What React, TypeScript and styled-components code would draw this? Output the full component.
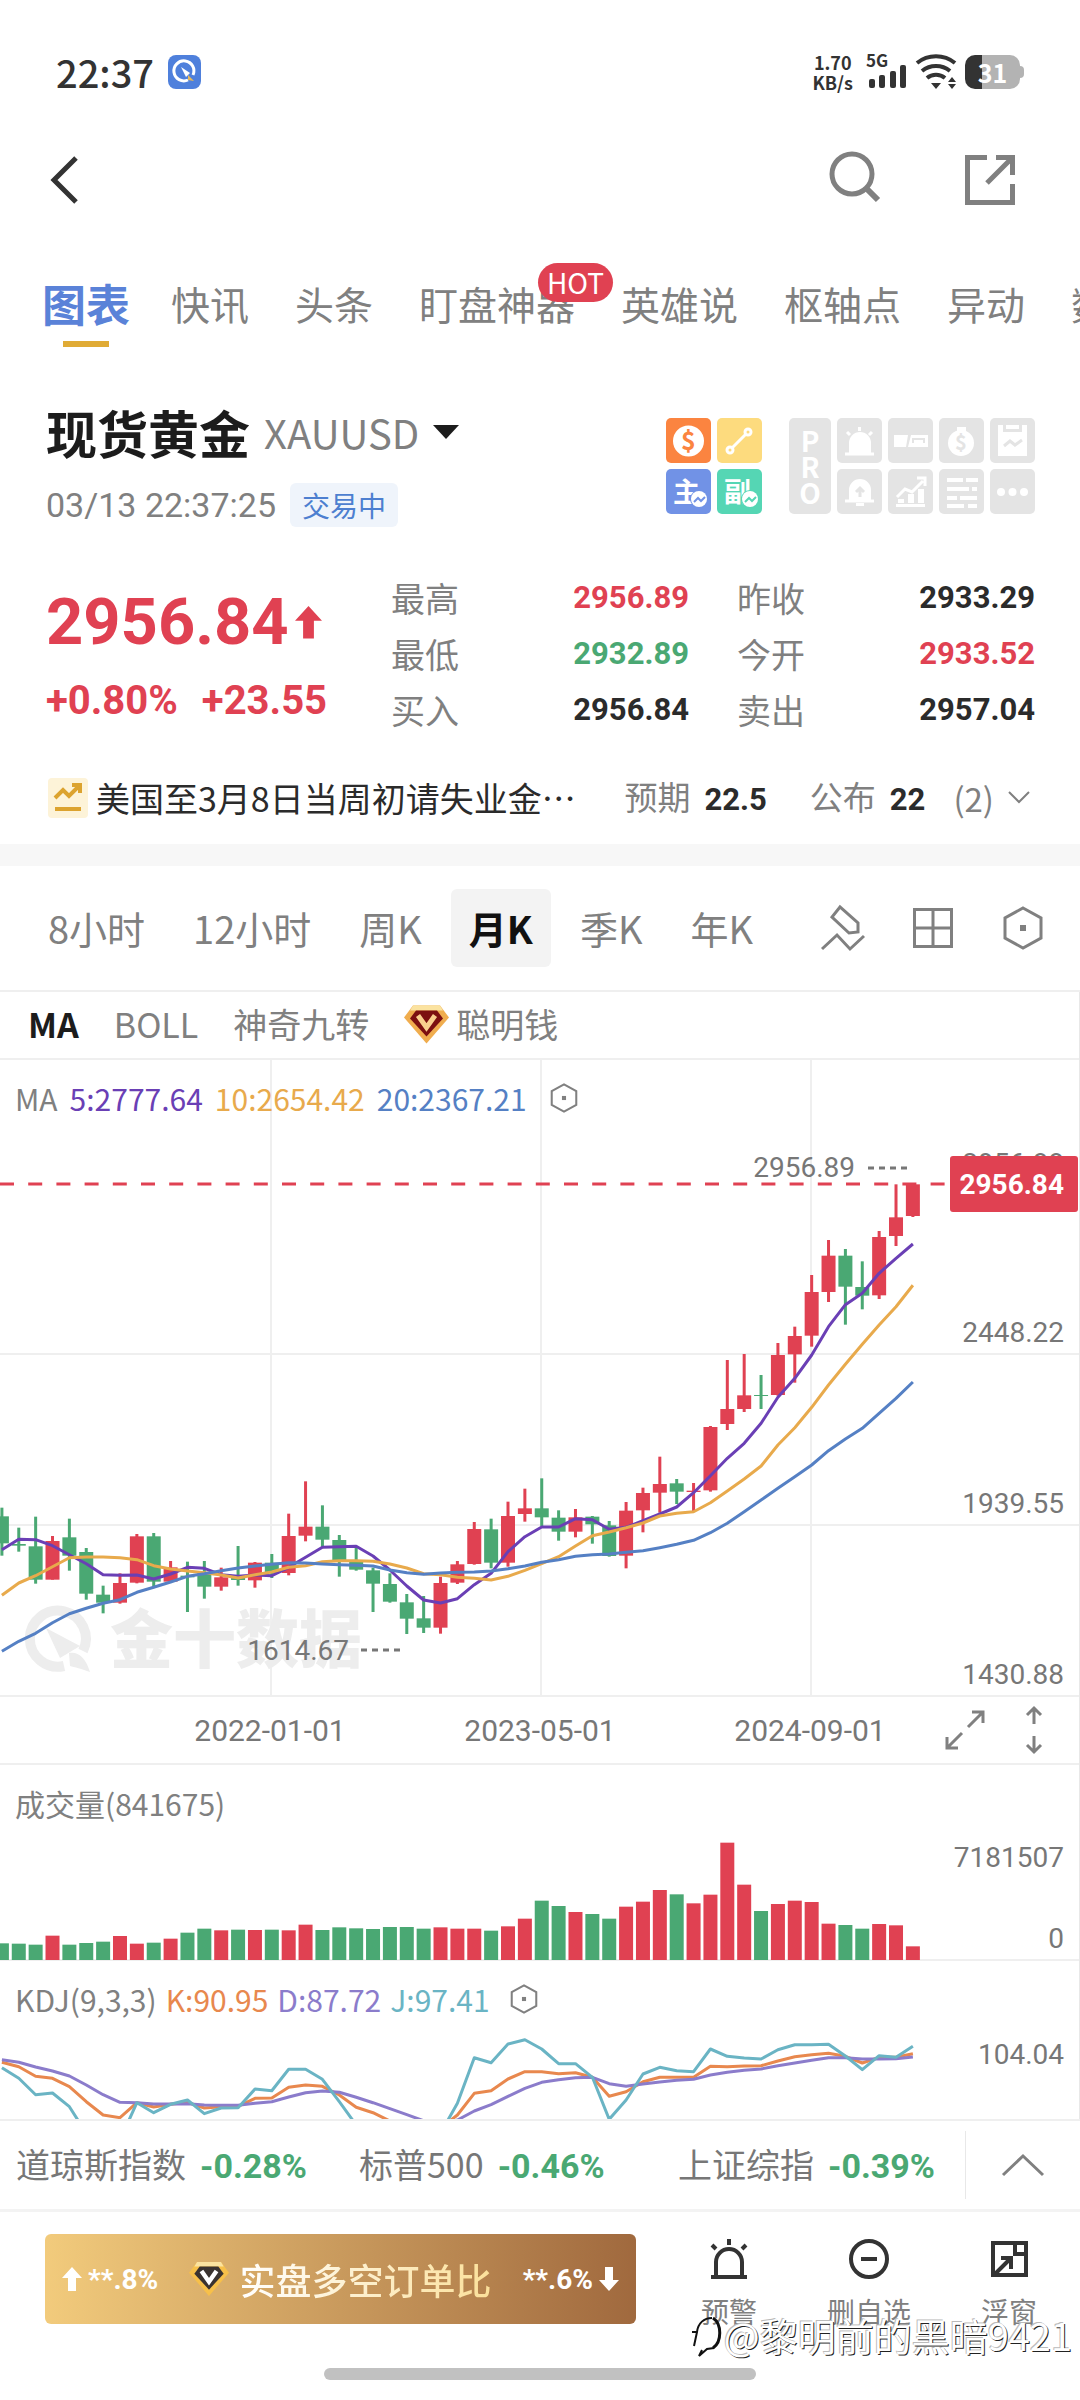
import React from 'react';
import styled, { createGlobalStyle, css } from 'styled-components';

const RED = '#e04152';
const GREEN = '#4aa873';
const GREY = '#808080';
const INK = '#2b2b2b';
const LINE = '#efefef';
const SANS = '"Noto Sans CJK SC", "Noto Sans", sans-serif';
const NUM = 'Roboto, "Noto Sans CJK SC", sans-serif';

const Global = createGlobalStyle`
  * { box-sizing: border-box; }
  body { margin: 0; background: #fff; font-family: ${SANS}; color: ${INK}; }
  button { font: inherit; color: inherit; background: none; border: 0; padding: 0; margin: 0; cursor: pointer; }
  a { color: inherit; text-decoration: none; }
  dl, dd, p, h1 { margin: 0; }
  svg { display: block; flex: none; overflow: visible; }
`;

const Page = styled.div`
  display: flex;
  flex-direction: column;
  overflow: hidden;
`;

/* ---------- status bar ---------- */
const StatusBar = styled.div`
  display: flex;
  align-items: center;
  justify-content: space-between;
  height: 132px;
  padding: 12px 60px 0 56px;
  color: #333;
`;
const Group = styled.div<{ $gap: number }>`
  display: flex;
  align-items: center;
  gap: ${(p) => p.$gap}px;
`;
const Clock = styled.span`
  font-size: 38px;
  font-weight: 500;
  line-height: 40px;
`;
const Speed = styled.span`
  margin-right: 4px;
  font-size: 18px;
  font-weight: 700;
  line-height: 20px;
  text-align: center;
`;
const Battery = styled.span`
  position: relative;
  display: flex;
  align-items: center;
  justify-content: center;
  width: 55px;
  height: 34px;
  border-radius: 10px;
  background: linear-gradient(90deg, #333 31%, #b3b3b3 31%);
  color: #fff;
  font-size: 25px;
  font-weight: 700;
  line-height: 34px;
  &::after {
    content: '';
    position: absolute;
    top: 11px;
    right: -4px;
    width: 5px;
    height: 12px;
    border-radius: 0 4px 4px 0;
    background: #b3b3b3;
  }
`;

/* ---------- top navigation ---------- */
const NavBar = styled.header`
  display: flex;
  align-items: center;
  justify-content: space-between;
  height: 96px;
  padding: 0 64px 0 48px;
`;
const IconButton = styled.button`
  display: flex;
  align-items: center;
  justify-content: center;
  color: ${GREY};
`;

const Tabs = styled.nav`
  display: flex;
  align-items: flex-start;
  padding: 48px 0 0 19px;
  white-space: nowrap;
`;
const Tab = styled.a<{ $active?: boolean }>`
  position: relative;
  flex: none;
  height: 71px;
  padding: 0 23px;
  font-size: 39px;
  line-height: 54px;
  color: ${GREY};
  ${(p) =>
    p.$active &&
    css`
      padding: 0 18px 0 23px;
      font-size: 44px;
      font-weight: 700;
      color: #5a82d8;
      &::after {
        content: '';
        display: block;
        width: 46px;
        height: 6px;
        margin: 11px auto 0;
        background: #e0ab35;
      }
    `}
`;
const HotBadge = styled.span`
  position: absolute;
  top: -13px;
  right: -15px;
  width: 75px;
  border-radius: 20px;
  background: ${RED};
  color: #fff;
  font-size: 28px;
  line-height: 39px;
  text-align: center;
`;

/* ---------- instrument header ---------- */
const Instrument = styled.section`
  display: flex;
  justify-content: space-between;
  align-items: flex-start;
  padding: 55px 45px 0 46px;
`;
const TitleRow = styled.div`
  display: flex;
  align-items: center;
  gap: 14px;
`;
const Title = styled.h1`
  font-size: 51px;
  font-weight: 700;
  line-height: 60px;
  color: #1c1c1c;
`;
const Ticker = styled.span`
  font-size: 40px;
  line-height: 60px;
  color: ${GREY};
`;
const DateRow = styled.div`
  display: flex;
  align-items: center;
  gap: 14px;
  margin-top: 21px;
`;
const DateText = styled.time`
  font-family: ${NUM};
  font-size: 34px;
  line-height: 44px;
  color: ${GREY};
`;
const StateTag = styled.span`
  padding: 0 12px;
  border-radius: 6px;
  background: #eff4fb;
  color: #4d7fd0;
  font-size: 28px;
  line-height: 44px;
`;
const Tools = styled.div`
  display: flex;
  gap: 27px;
  margin-top: 16px;
`;
const ProTools = styled.div`
  display: flex;
  gap: 6px;
`;
const TileGrid = styled.div<{ $cols: number }>`
  display: grid;
  grid-template-columns: repeat(${(p) => p.$cols}, 45px);
  grid-auto-rows: 45px;
  gap: 6px;
`;
const Tile = styled.button<{ $bg: string }>`
  display: flex;
  align-items: center;
  justify-content: center;
  border-radius: 5px;
  background: ${(p) => p.$bg};
`;
const ProTile = styled.span`
  display: flex;
  flex-direction: column;
  align-items: center;
  justify-content: center;
  width: 42px;
  border-radius: 5px;
  background: #e4e4e4;
  color: #fff;
  font-size: 28px;
  font-weight: 700;
  line-height: 26px;
`;

/* ---------- quote ---------- */
const Quote = styled.section`
  display: grid;
  grid-template-columns: 345fr 644fr;
  padding: 43px 45px 0 46px;
`;
const Price = styled.div`
  display: flex;
  align-items: center;
  gap: 6px;
  font-family: ${NUM};
  font-size: 65px;
  font-weight: 700;
  line-height: 104px;
  color: ${RED};
`;
const Change = styled.div`
  display: flex;
  gap: 24px;
  font-family: ${NUM};
  font-size: 40px;
  font-weight: 700;
  line-height: 54px;
  color: ${RED};
`;
const Stats = styled.dl`
  display: grid;
  grid-template-columns: 1fr 1fr;
  column-gap: 48px;
`;
const Stat = styled.div`
  display: flex;
  justify-content: space-between;
  font-size: 34px;
  line-height: 56px;
`;
const StatLabel = styled.dt`
  color: ${GREY};
`;
const StatValue = styled.dd<{ $color: string }>`
  font-family: ${NUM};
  font-size: 31px;
  font-weight: 700;
  color: ${(p) => p.$color};
`;

/* ---------- news line ---------- */
const News = styled.section`
  display: flex;
  align-items: center;
  height: 106px;
  padding: 13px 50px 0 48px;
  font-size: 34px;
  line-height: 54px;
  white-space: nowrap;
`;
const NewsTitle = styled.a`
  margin: 0 auto 0 8px;
`;
const NewsFact = styled.span<{ $gap: number }>`
  margin-right: ${(p) => p.$gap}px;
  color: ${GREY};
  font-size: 33px;
`;
const NewsNumber = styled.b`
  margin-left: 14px;
  font-family: ${NUM};
  font-size: 31px;
  color: ${INK};
`;
const Band = styled.div`
  height: 22px;
  background: #f7f7f7;
`;

/* ---------- period selector ---------- */
const Periods = styled.nav`
  display: flex;
  align-items: center;
  justify-content: space-between;
  height: 126px;
  padding: 0 35px 0 29px;
  border-bottom: 2px solid ${LINE};
`;
const Period = styled.button<{ $active?: boolean }>`
  padding: 0 ${(p) => (p.$active ? 18 : 19)}px;
  border-radius: 6px;
  font-size: 38px;
  line-height: 78px;
  color: ${(p) => (p.$active ? '#111' : GREY)};
  font-weight: ${(p) => (p.$active ? 700 : 400)};
  background: ${(p) => (p.$active ? '#f3f3f3' : 'none')};
`;

/* ---------- charts ---------- */
const Charts = styled.section`
  position: relative;
  &::after {
    content: '';
    position: absolute;
    top: 0;
    right: 0;
    bottom: 0;
    width: 1px;
    background: #e8e8e8;
  }
`;
const Indicators = styled.div`
  display: flex;
  align-items: center;
  gap: 35px;
  height: 68px;
  padding: 0 0 2px 28px;
  border-bottom: 2px solid ${LINE};
`;
const Indicator = styled.button<{ $active?: boolean }>`
  display: flex;
  align-items: center;
  gap: 7px;
  font-size: 34px;
  line-height: 50px;
  color: ${(p) => (p.$active ? '#1c1c1c' : GREY)};
  font-weight: ${(p) => (p.$active ? 700 : 400)};
`;
const Pane = styled.div`
  position: relative;
`;
const Plot = styled.svg`
  width: 100%;
  height: auto;
`;
const Legend = styled.div<{ $gap: number }>`
  position: absolute;
  top: 16px;
  left: 15px;
  display: flex;
  align-items: center;
  gap: ${(p) => p.$gap}px;
  font-size: 30px;
  line-height: 44px;
  color: ${GREY};
  white-space: nowrap;
`;
const LegendItem = styled.span<{ $color: string }>`
  color: ${(p) => p.$color};
`;
const LegendButton = styled(IconButton)`
  margin-left: 10px;
`;
const DateAxis = styled.div`
  display: grid;
  grid-template-columns: 1fr 1fr 1fr 0.5fr;
  align-items: center;
  height: 68px;
  padding-left: 12.5%;
  border-bottom: 2px solid ${LINE};
  font-family: ${NUM};
  font-size: 30px;
  color: #777;
  text-align: center;
`;
const AxisButtons = styled.div`
  display: flex;
  align-items: center;
  justify-content: space-between;
  padding: 0 36px 0 0;
`;
const Clip = styled.div`
  overflow: hidden;
`;

/* ---------- index strip ---------- */
const IndexStrip = styled.section`
  display: grid;
  grid-template-columns: 343fr 319fr 287fr auto;
  align-items: center;
  height: 93px;
  padding: 0 35px 0 16px;
  border-top: 2px solid ${LINE};
  border-bottom: 3px solid #f3f3f3;
`;
const Index = styled.a`
  font-size: 34px;
  line-height: 50px;
  color: #777;
  white-space: nowrap;
`;
const IndexChange = styled.b`
  margin-left: 14px;
  font-family: ${NUM};
  font-size: 34px;
  color: ${GREEN};
`;
const Expand = styled(IconButton)`
  height: 68px;
  padding-left: 35px;
  border-left: 1px solid #e8e8e8;
`;

/* ---------- bottom bar ---------- */
const BottomBar = styled.footer`
  position: relative;
  display: flex;
  align-items: flex-start;
  justify-content: space-between;
  height: 156px;
  padding: 22px 43px 0 45px;
`;
const RatioButton = styled.button`
  display: flex;
  flex: 0 1 591px;
  align-items: center;
  justify-content: space-between;
  height: 90px;
  padding: 0 17px;
  border-radius: 6px;
  background: linear-gradient(90deg, #f2cb7c, #c99a5d 50%, #a0693e);
`;
const RatioSide = styled.span`
  display: flex;
  align-items: center;
  gap: 6px;
  color: #fff;
  font-family: ${NUM};
  font-size: 28px;
  font-weight: 700;
`;
const RatioTitle = styled.span`
  display: flex;
  align-items: center;
  gap: 10px;
`;
const RatioText = styled.span`
  background: linear-gradient(90deg, #fff, #fbe09a);
  background-clip: text;
  color: transparent;
  font-size: 36px;
  font-weight: 500;
`;
const Actions = styled.div`
  display: flex;
  gap: 70px;
  padding-top: 4px;
`;
const Action = styled.button`
  display: flex;
  flex-direction: column;
  align-items: center;
  gap: 11px;
  color: ${GREY};
  font-size: 28px;
  line-height: 40px;
`;
const Signature = styled.span`
  position: absolute;
  right: 8px;
  bottom: 6px;
  display: flex;
  align-items: center;
  font-size: 38px;
  line-height: 54px;
  color: #fff;
  text-shadow: 1px 1px 0 #222, -1px -1px 0 #bbb;
  white-space: nowrap;
`;
const HomeBar = styled.div`
  width: 40%;
  height: 12px;
  margin: 0 auto 20px;
  border-radius: 6px;
  background: #c1c1c1;
`;

/* ---------- icons ---------- */
const Hexagon = ({ size, stroke }: { size: number; stroke: number }) => (
  <svg width={size} height={size} viewBox="0 0 44 44" fill="none" stroke={GREY} strokeWidth={stroke}>
    <path d="M22 2 40 12v20L22 42 4 32V12z" />
    <rect x="19" y="19" width="6" height="6" fill={GREY} stroke="none" />
  </svg>
);

const Diamond = ({ dark, size }: { dark?: boolean; size: number }) => (
  <svg width={size} height={size} viewBox="0 0 45 40">
    <path d="M9 1h27l9 12-22.500 26L0 13z" fill={dark ? '#f7c04a' : '#f0ad4e'} />
    <path d="M9 1h27l3 5H6z" fill="#fbe3a0" />
    <path d="M12 6h21l6 8-16.500 18L6 14z" fill={dark ? '#3a3330' : '#7c1010'} />
    <path d="m14 11 8.500 12L31 11" fill="none" stroke={dark ? '#fff' : '#f9cf8d'} strokeWidth="5" />
  </svg>
);

const Arrow = ({ size, color, down }: { size: number; color: string; down?: boolean }) => (
  <svg width={size} height={size * 1.2} viewBox="0 0 20 24">
    <path d={down ? 'M10 24 0 13h6V0h8v13h6z' : 'M10 0 20 11h-6v13H6V11H0z'} fill={color} />
  </svg>
);

const Spark = ({ x, y, color }: { x: number; y: number; color: string }) => (
  <g>
    <circle cx={x} cy={y} r="9" fill={color} />
    <circle cx={x} cy={y} r="8" fill="#fff" />
    <path d={`m${x - 5} ${y + 3} 4-4 3 3 4-4`} fill="none" stroke={color} strokeWidth="2" />
  </g>
);

const GREY_TILE = '#e4e4e4';
const greyTiles: { name: string; art: React.ReactNode }[] = [
  {
    name: '警报',
    art: (
      <>
        <path d="M12 35V25a11 11 0 0 1 22 0v10z" fill="#fff" />
        <path d="M8 36h29M10 14l3 3M35 14l-3 3M22.500 9v4" stroke="#fff" strokeWidth="3" />
      </>
    ),
  },
  {
    name: '对比',
    art: (
      <>
        <path d="M6 17h14l-2 12H6zM23 17h17v12H20z" fill="#fff" />
        <path d="M25 25v-4h11v4" fill="none" stroke={GREY_TILE} strokeWidth="2" />
      </>
    ),
  },
  {
    name: '资金',
    art: (
      <>
        <circle cx="22" cy="25" r="13" fill="#fff" />
        <path d="M18 9h9v5h-9z" fill="#fff" />
        <text x="22" y="32" fontSize="20" fontWeight="700" textAnchor="middle" fill={GREY_TILE}>$</text>
      </>
    ),
  },
  {
    name: '日历',
    art: (
      <>
        <path d="M8 7h5v7h19V7h5v31H8zM16 7h13v4H16z" fill="#fff" />
        <path d="m14 28 6-5 5 4 7-5" fill="none" stroke={GREY_TILE} strokeWidth="3" />
      </>
    ),
  },
  {
    name: '提醒',
    art: (
      <>
        <path d="M12 32V21a11 11 0 0 1 22 0v11zM19 34h8v3h-8z" fill="#fff" />
        <path d="M8 32h29" stroke="#fff" strokeWidth="3" />
        <path d="M23 28v-8m-4 3 4-4 4 4" fill="none" stroke={GREY_TILE} strokeWidth="3" />
      </>
    ),
  },
  {
    name: '趋势',
    art: (
      <>
        <path d="M9 28l8-8 7 3 11-11M29 9h8v8" fill="none" stroke="#fff" strokeWidth="3" />
        <path d="M10 30h6v4h-6zM20 25h6v9h-6zM30 20h6v14h-6zM8 35h29v3H8z" fill="#fff" />
      </>
    ),
  },
  {
    name: '行情',
    art: <path d="M8 11h16M27 11h12M8 20h22M33 20h5M8 29h10M21 29h17M8 37h17M29 37h9" stroke="#fff" strokeWidth="4" />,
  },
  {
    name: '更多',
    art: (
      <g fill="#fff">
        <circle cx="11" cy="23" r="4" />
        <circle cx="22.500" cy="23" r="4" />
        <circle cx="34" cy="23" r="4" />
      </g>
    ),
  },
];

/* ---------- chart data ---------- */
// Candle: colour, high, body top, body bottom, low. Levels count downwards, three to a pixel.
type Candle = ['r' | 'g', number, number, number, number];
const candles: Candle[] = [
  ['g', 173, 199, 280, 317], ['g', 233, 282, 287, 305], ['g', 200, 289, 389, 401], ['r', 258, 273, 389, 389],
  ['g', 206, 262, 317, 362], ['g', 294, 306, 431, 449], ['g', 407, 434, 458, 490], ['r', 370, 399, 458, 461],
  ['r', 252, 259, 398, 400], ['g', 249, 259, 395, 411], ['r', 333, 352, 395, 397], ['g', 335, 377, 382, 486],
  ['g', 333, 369, 410, 446], ['r', 353, 382, 410, 422], ['g', 288, 377, 390, 407], ['r', 336, 338, 391, 413],
  ['g', 312, 338, 369, 384], ['r', 191, 258, 369, 376], ['r', 94, 230, 257, 274], ['g', 166, 230, 269, 291],
  ['g', 255, 270, 330, 380], ['g', 290, 335, 359, 362], ['g', 353, 361, 401, 486], ['g', 370, 402, 455, 458],
  ['g', 432, 457, 506, 552], ['g', 438, 505, 533, 549], ['r', 380, 399, 533, 551], ['r', 333, 343, 398, 402],
  ['r', 216, 237, 342, 344], ['g', 206, 238, 338, 355], ['r', 155, 198, 338, 350], ['r', 116, 175, 192, 215],
  ['g', 85, 175, 202, 228], ['g', 181, 203, 245, 272], ['r', 177, 202, 245, 262], ['g', 198, 200, 223, 281],
  ['g', 213, 226, 318, 320], ['r', 156, 182, 317, 355], ['r', 113, 129, 181, 247], ['r', 20, 102, 128, 188],
  ['g', 87, 100, 125, 162], ['r', 99, 122, 126, 185], ['r', -72, -69, 121, 125], ['r', -270, -123, -78, -60],
  ['r', -288, -164, -123, -114], ['g', -225, -165, -162, -123], ['r', -321, -285, -165, -163], ['r', -370, -342, -287, -202],
  ['r', -525, -474, -343, -310], ['r', -630, -583, -474, -444], ['g', -603, -583, -490, -376], ['g', -566, -489, -463, -422],
  ['r', -657, -639, -464, -453], ['r', -797, -698, -642, -612], ['r', -797, -797, -702, -699],
];
const ma5 = [299, 268, 269, 287, 314, 341, 374, 376, 375, 387, 372, 352, 355, 374, 379, 375, 377, 352, 322, 292, 290, 289, 318, 360, 408, 450, 459, 446, 404, 370, 305, 260, 231, 231, 206, 209, 238, 232, 212, 192, 171, 128, 77, 25, -20, -80, -158, -215, -285, -370, -436, -470, -530, -575, -618];
const ma10 = [436, 399, 377, 350, 323, 321, 321, 323, 329, 347, 357, 363, 368, 375, 384, 374, 366, 352, 347, 335, 332, 332, 334, 342, 354, 371, 374, 382, 385, 390, 379, 361, 341, 320, 288, 257, 246, 233, 219, 198, 190, 185, 158, 123, 87, 48, -15, -67, -128, -195, -257, -317, -375, -430, -494];
const ma20 = [604, 574, 550, 518, 491, 475, 460, 449, 427, 412, 396, 379, 371, 362, 354, 348, 343, 338, 339, 342, 344, 346, 348, 360, 368, 373, 369, 367, 366, 363, 356, 348, 337, 329, 319, 314, 312, 307, 302, 293, 283, 271, 248, 220, 185, 150, 115, 80, 45, 2, -33, -65, -110, -155, -204];
const volumes = [50, 49, 46, 73, 46, 51, 55, 72, 49, 52, 64, 82, 94, 89, 91, 90, 91, 89, 106, 90, 98, 95, 93, 99, 99, 94, 98, 94, 94, 88, 101, 124, 178, 162, 144, 138, 124, 160, 175, 210, 197, 170, 196, 352, 226, 147, 168, 178, 174, 109, 105, 94, 108, 104, 41];
const lineK = [877, 890, 919, 925, 950, 995, 1035, 1043, 998, 1011, 1003, 997, 1014, 1010, 1009, 985, 984, 952, 945, 949, 975, 1012, 1028, 1053, 1075, 1090, 1075, 1035, 970, 962, 927, 905, 905, 911, 908, 922, 979, 965, 935, 922, 922, 922, 889, 890, 888, 887, 873, 860, 854, 850, 859, 879, 862, 862, 851];
const lineD = [869, 877, 891, 903, 918, 945, 974, 997, 998, 1002, 1002, 1001, 1005, 1006, 1006, 1000, 995, 981, 968, 963, 967, 982, 998, 1016, 1034, 1052, 1065, 1050, 1023, 1004, 979, 955, 937, 929, 923, 922, 941, 949, 942, 936, 931, 928, 915, 907, 901, 897, 887, 879, 871, 863, 863, 867, 867, 866, 861];
const lineJ = [893, 925, 974, 969, 1010, 1090, 1150, 1110, 998, 1028, 1003, 990, 1031, 1014, 1013, 957, 962, 898, 898, 928, 995, 1065, 1100, 1150, 1180, 1160, 1090, 1000, 863, 878, 822, 809, 837, 881, 881, 922, 1048, 990, 912, 892, 902, 905, 837, 859, 864, 867, 839, 824, 824, 823, 858, 899, 857, 862, 829];

const xAt = (i: number) => 1.9 + i * 16.87;
const priceY = (v: number) => v / 3 + 390;
const kdjY = (v: number) => (v - 573) / 3;
const points = (data: number[], toY: (v: number) => number) =>
  data.map((v, i) => `${xAt(i).toFixed(1)},${toY(v).toFixed(1)}`).join(' ');
const tint = (c: 'r' | 'g') => (c === 'r' ? RED : GREEN);

const PriceChart = () => (
  <Plot viewBox="0 0 1080 637" role="img" aria-label="月K线图">
    <g stroke={LINE} strokeWidth="2">
      <path d="M271 0V637M541 0V637M811 0V637M0 294H1080M0 465H1080M0 636H1080" />
    </g>
    <path d="M83 591A28 28 0 1 0 64 606" fill="none" stroke="#ededed" strokeWidth="10" />
    <path d="m46 568 14 30 20-12zM69 593c9-2 17 5 21 19-8-3-16-5-20-6z" fill="#ededed" />
    <text x="110" y="602" fontSize="63" fontWeight="900" fill="#ededed">金十数据</text>
    <path d="M0 124H950" stroke={RED} strokeWidth="3" strokeDasharray="14 14.2" />
    {candles.map(([c, high, top, bottom, low], i) => (
      <g key={i} fill={tint(c)}>
        <rect x={xAt(i) - 1.5} y={priceY(high)} width="3" height={(low - high) / 3} />
        <rect x={xAt(i) - 7} y={priceY(top)} width="14" height={(bottom - top) / 3} />
      </g>
    ))}
    <g fill="none" strokeWidth="3" strokeLinejoin="round">
      <polyline points={points(ma5, priceY)} stroke="#6a3fb5" />
      <polyline points={points(ma10, priceY)} stroke="#e8aa4c" />
      <polyline points={points(ma20, priceY)} stroke="#5580c4" />
    </g>
    <g fontFamily={NUM} fontSize="28" fill="#777">
      <text x="855" y="117" textAnchor="end">2956.89</text>
      <text x="349" y="600" textAnchor="end">1614.67</text>
      <text x="1064" y="113" textAnchor="end">2956.88</text>
      <text x="1064" y="282" textAnchor="end">2448.22</text>
      <text x="1064" y="453" textAnchor="end">1939.55</text>
      <text x="1064" y="624" textAnchor="end">1430.88</text>
    </g>
    <path d="M868 108h40M361 590h40" stroke="#777" strokeWidth="3" strokeDasharray="6 5" />
    <rect x="950" y="96" width="128" height="56" rx="3" fill={RED} />
    <text x="1064" y="134" textAnchor="end" fontFamily={NUM} fontSize="28" fontWeight="700" fill="#fff">2956.84</text>
  </Plot>
);

const VolumeChart = () => (
  <Plot viewBox="0 0 1080 196" role="img" aria-label="成交量">
    <path d="M0 195H1080" stroke={LINE} strokeWidth="2" />
    {volumes.map((v, i) => (
      <rect key={i} x={xAt(i) - 7} y={195 - v / 3} width="14" height={v / 3} fill={tint(candles[i][0])} />
    ))}
    <g fontFamily={NUM} fontSize="28" fill="#777" textAnchor="end">
      <text x="1064" y="102">7181507</text>
      <text x="1064" y="183">0</text>
    </g>
  </Plot>
);

const KdjChart = () => (
  <Clip>
    <Plot viewBox="0 0 1080 158" role="img" aria-label="KDJ">
      <g fill="none" strokeWidth="3" strokeLinejoin="round">
        <polyline points={points(lineK, kdjY)} stroke="#e8884e" />
        <polyline points={points(lineD, kdjY)} stroke="#8b7ccb" />
        <polyline points={points(lineJ, kdjY)} stroke="#6ab4c4" />
      </g>
      <text x="1064" y="103" fontFamily={NUM} fontSize="28" fill="#777" textAnchor="end">104.04</text>
    </Plot>
  </Clip>
);

const stats = [
  { label: '最高', value: '2956.89', color: RED },
  { label: '昨收', value: '2933.29', color: INK },
  { label: '最低', value: '2932.89', color: GREEN },
  { label: '今开', value: '2933.52', color: RED },
  { label: '买入', value: '2956.84', color: INK },
  { label: '卖出', value: '2957.04', color: INK },
];
const indices = [
  { name: '道琼斯指数', change: '-0.28%' },
  { name: '标普500', change: '-0.46%' },
  { name: '上证综指', change: '-0.39%' },
];

export default function App() {
  return (
    <Page lang="zh-CN">
      <Global />
      <StatusBar>
        <Group $gap={14}>
          <Clock>22:37</Clock>
          <svg width="33" height="34" viewBox="0 0 33 34">
            <rect width="33" height="34" rx="8" fill="#4f80dc" />
            <path d="M20 25a10 10 0 1 1 5-5" fill="none" stroke="#fff" strokeWidth="3" />
            <path d="m13 12 9 6-4 4z" fill="#fff" />
            <path d="m20 20 6 6-6-1z" fill="#e8b95a" />
          </svg>
        </Group>
        <Group $gap={8}>
          <Speed>1.70<br />KB/s</Speed>
          <svg width="42" height="34" viewBox="0 0 42 34" fill="#333">
            <text x="1" y="12" fontSize="17" fontWeight="700">5G</text>
            <rect x="4" y="24" width="6" height="9" rx="2" />
            <rect x="14" y="20" width="6" height="13" rx="2" />
            <rect x="25" y="16" width="6" height="17" rx="2" />
            <rect x="35" y="10" width="6" height="23" rx="2" />
          </svg>
          <svg width="42" height="34" viewBox="0 0 42 34" fill="none" stroke="#333" strokeWidth="4">
            <path d="M2 8a30 30 0 0 1 38 0M7 16a22 22 0 0 1 28 0M12 23a14 14 0 0 1 18 0" />
            <path d="M16 28h10l-5 6zM33 27l4-5 4 5zM33 29h8l-4 5z" fill="#333" stroke="none" />
          </svg>
          <Battery>31</Battery>
        </Group>
      </StatusBar>

      <NavBar>
        <IconButton aria-label="返回">
          <svg width="32" height="52" viewBox="0 0 32 52" fill="none" stroke="#333" strokeWidth="5">
            <path d="M28 4 6 26l22 22" />
          </svg>
        </IconButton>
        <Group $gap={84}>
          <IconButton aria-label="搜索">
            <svg width="52" height="52" viewBox="0 0 52 52" fill="none" stroke={GREY} strokeWidth="5">
              <circle cx="24" cy="20" r="20" />
              <path d="m38 34 12 12" strokeWidth="6" />
            </svg>
          </IconButton>
          <IconButton aria-label="分享">
            <svg width="52" height="52" viewBox="0 0 52 52" fill="none" stroke={GREY} strokeWidth="5">
              <path d="M23 3.500H3.500v45h45V30M32 3.500h16.500V21M48 4 23 29" />
            </svg>
          </IconButton>
        </Group>
      </NavBar>

      <Tabs>
        <Tab href="#chart" $active>图表</Tab>
        <Tab href="#flash">快讯</Tab>
        <Tab href="#news">头条</Tab>
        <Tab href="#watch">盯盘神器<HotBadge>HOT</HotBadge></Tab>
        <Tab href="#hero">英雄说</Tab>
        <Tab href="#pivot">枢轴点</Tab>
        <Tab href="#moves">异动</Tab>
        <Tab href="#data">数据</Tab>
      </Tabs>

      <Instrument>
        <div>
          <TitleRow>
            <Title>现货黄金</Title>
            <Ticker>XAUUSD</Ticker>
            <IconButton aria-label="切换品种">
              <svg width="26" height="14" viewBox="0 0 26 14"><path d="M0 0h26L13 14z" fill="#1c1c1c" /></svg>
            </IconButton>
          </TitleRow>
          <DateRow>
            <DateText>03/13 22:37:25</DateText>
            <StateTag>交易中</StateTag>
          </DateRow>
        </div>
        <Tools>
          <TileGrid $cols={2}>
            <Tile $bg="#fb8440" aria-label="报价">
              <svg width="45" height="45" viewBox="0 0 45 45">
                <circle cx="22.500" cy="23" r="15.500" fill="#fff" />
                <text x="22.500" y="32" fontSize="25" fontWeight="700" textAnchor="middle" fill="#fb8440">$</text>
              </svg>
            </Tile>
            <Tile $bg="#fddb7e" aria-label="画线">
              <svg width="45" height="45" viewBox="0 0 45 45" fill="none" stroke="#fff" strokeWidth="3">
                <circle cx="13" cy="32" r="3" />
                <circle cx="31" cy="14" r="3" />
                <path d="m15 30 14-14" />
              </svg>
            </Tile>
            <Tile $bg="#7192e6" aria-label="主图">
              <svg width="45" height="45" viewBox="0 0 45 45">
                <text x="7" y="33" fontSize="27" fontWeight="700" fill="#fff">主</text>
                <Spark x={33} y={30} color="#7192e6" />
              </svg>
            </Tile>
            <Tile $bg="#55d6b4" aria-label="副图">
              <svg width="45" height="45" viewBox="0 0 45 45">
                <text x="7" y="33" fontSize="27" fontWeight="700" fill="#fff">副</text>
                <Spark x={33} y={30} color="#55d6b4" />
              </svg>
            </Tile>
          </TileGrid>
          <ProTools>
            <ProTile><span>P</span><span>R</span><span>O</span></ProTile>
            <TileGrid $cols={4}>
              {greyTiles.map((t) => (
                <Tile key={t.name} $bg={GREY_TILE} aria-label={t.name}>
                  <svg width="45" height="45" viewBox="0 0 45 45">{t.art}</svg>
                </Tile>
              ))}
            </TileGrid>
          </ProTools>
        </Tools>
      </Instrument>

      <Quote>
        <div>
          <Price>2956.84<Arrow size={27} color={RED} /></Price>
          <Change><span>+0.80%</span><span>+23.55</span></Change>
        </div>
        <Stats>
          {stats.map((s) => (
            <Stat key={s.label}>
              <StatLabel>{s.label}</StatLabel>
              <StatValue $color={s.color}>{s.value}</StatValue>
            </Stat>
          ))}
        </Stats>
      </Quote>

      <News>
        <svg width="40" height="40" viewBox="0 0 40 40">
          <rect width="40" height="40" rx="4" fill="#fdf3d8" />
          <path d="m7 20 8-8 6 6 10-10M24 7h8v8M7 31h26" fill="none" stroke="#dca32f" strokeWidth="4" />
        </svg>
        <NewsTitle href="#calendar">美国至3月8日当周初请失业金…</NewsTitle>
        <NewsFact $gap={43}>预期<NewsNumber>22.5</NewsNumber></NewsFact>
        <NewsFact $gap={28}>公布<NewsNumber>22</NewsNumber></NewsFact>
        <NewsFact $gap={14}>(2)</NewsFact>
        <IconButton aria-label="展开">
          <svg width="22" height="13" viewBox="0 0 22 13" fill="none" stroke={GREY} strokeWidth="2"><path d="m1 1 10 10L21 1" /></svg>
        </IconButton>
      </News>
      <Band />

      <Periods>
        <Group $gap={10}>
          <Period>8小时</Period>
          <Period>12小时</Period>
          <Period>周K</Period>
          <Period $active>月K</Period>
          <Period>季K</Period>
          <Period>年K</Period>
        </Group>
        <Group $gap={46}>
          <IconButton aria-label="画图">
            <svg width="44" height="48" viewBox="0 0 44 48" fill="none" stroke={GREY} strokeWidth="3">
              <path d="M19 3 11 13l17 16 9-1V19zM1 45l15-14 13 14 14-13" />
            </svg>
          </IconButton>
          <IconButton aria-label="多图">
            <svg width="44" height="44" viewBox="0 0 44 44" fill="none" stroke={GREY} strokeWidth="3">
              <path d="M3.500 3.500h37v37h-37zM22 3v38M3 22h38" />
            </svg>
          </IconButton>
          <IconButton aria-label="设置"><Hexagon size={44} stroke={3} /></IconButton>
        </Group>
      </Periods>

      <Charts>
        <Indicators>
          <Indicator $active>MA</Indicator>
          <Indicator>BOLL</Indicator>
          <Indicator>神奇九转</Indicator>
          <Indicator><Diamond size={45} />聪明钱</Indicator>
        </Indicators>
        <Pane>
          <PriceChart />
          <Legend $gap={12}>
            <span>MA</span>
            <LegendItem $color="#6a3fb5">5:2777.64</LegendItem>
            <LegendItem $color="#e8aa4c">10:2654.42</LegendItem>
            <LegendItem $color="#5580c4">20:2367.21</LegendItem>
            <LegendButton aria-label="MA设置"><Hexagon size={30} stroke={3} /></LegendButton>
          </Legend>
        </Pane>
        <DateAxis>
          <span>2022-01-01</span>
          <span>2023-05-01</span>
          <span>2024-09-01</span>
          <AxisButtons>
            <IconButton aria-label="全屏">
              <svg width="40" height="40" viewBox="0 0 40 40" fill="none" stroke={GREY} strokeWidth="3">
                <path d="M23 17 38 2M27 2h11v11M17 23 2 38M2 27v11h11" />
              </svg>
            </IconButton>
            <IconButton aria-label="调整高度">
              <svg width="20" height="48" viewBox="0 0 20 48" fill="none" stroke={GREY} strokeWidth="3">
                <path d="M10 18V2M3 9l7-7 7 7M10 30v16M3 39l7 7 7-7" />
              </svg>
            </IconButton>
          </AxisButtons>
        </DateAxis>
        <Pane>
          <VolumeChart />
          <Legend $gap={9}><span>成交量(841675)</span></Legend>
        </Pane>
        <Pane>
          <KdjChart />
          <Legend $gap={9}>
            <span>KDJ(9,3,3)</span>
            <LegendItem $color="#e8884e">K:90.95</LegendItem>
            <LegendItem $color="#8b7ccb">D:87.72</LegendItem>
            <LegendItem $color="#6ab4c4">J:97.41</LegendItem>
            <LegendButton aria-label="KDJ设置"><Hexagon size={30} stroke={3} /></LegendButton>
          </Legend>
        </Pane>
      </Charts>

      <IndexStrip>
        {indices.map((x) => (
          <Index key={x.name} href="#index">{x.name}<IndexChange>{x.change}</IndexChange></Index>
        ))}
        <Expand aria-label="展开指数">
          <svg width="44" height="24" viewBox="0 0 44 24" fill="none" stroke={GREY} strokeWidth="3"><path d="M2 22 22 3l20 19" /></svg>
        </Expand>
      </IndexStrip>

      <BottomBar>
        <RatioButton>
          <RatioSide><Arrow size={20} color="#fff" />**.8%</RatioSide>
          <RatioTitle><Diamond dark size={40} /><RatioText>实盘多空订单比</RatioText></RatioTitle>
          <RatioSide>**.6%<Arrow size={20} color="#fff" down /></RatioSide>
        </RatioButton>
        <Actions>
          <Action>
            <svg width="40" height="42" viewBox="0 0 40 42" fill="none" stroke="#333" strokeWidth="4">
              <path d="M7 38V24a13 13 0 0 1 26 0v14M2 39h36M20 1v6M3 7l4 4M37 7l-4 4" />
            </svg>
            预警
          </Action>
          <Action>
            <svg width="40" height="42" viewBox="0 0 40 42" fill="none" stroke="#333" strokeWidth="4">
              <circle cx="20" cy="21" r="18" />
              <path d="M12 21h16" />
            </svg>
            删自选
          </Action>
          <Action>
            <svg width="40" height="42" viewBox="0 0 40 42" fill="none" stroke="#333" strokeWidth="4">
              <path d="M4 5h33v32H4zM26 5v11h11" />
              <path d="m6 36 14-14M12 20h10v11" />
            </svg>
            浮窗
          </Action>
        </Actions>
        <Signature>
          <svg width="34" height="46" viewBox="0 0 34 46" fill="none" stroke="#111" strokeWidth="2">
            <path d="M2 20h5c1-9 7-14 15-14M7 20 4 34M12 38l-3 6 8-7 7-1" />
            <path d="M23 6c9 6 9 24 0 30" strokeWidth="3" />
          </svg>
          @黎明前的黑暗9421
        </Signature>
      </BottomBar>
      <HomeBar />
    </Page>
  );
}
